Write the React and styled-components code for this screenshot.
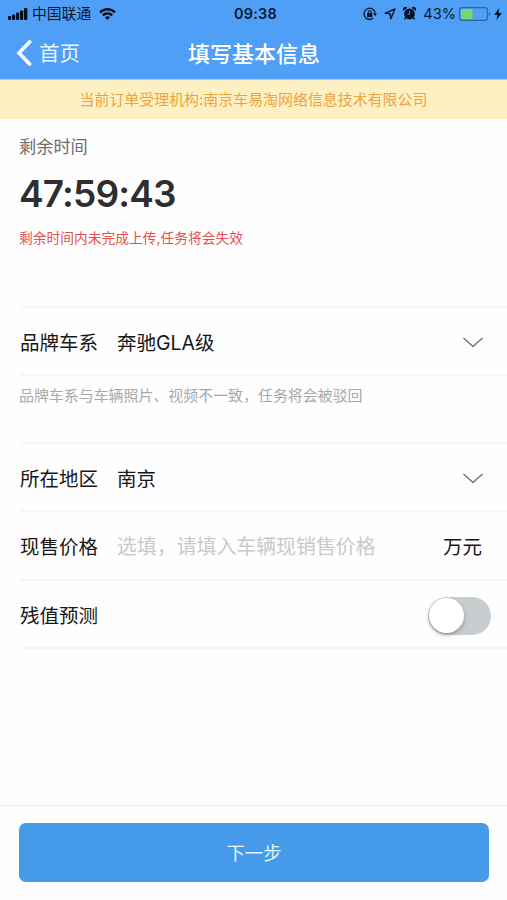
import React, {useState} from 'react';
import styled, {createGlobalStyle} from 'styled-components';

const GlobalStyle = createGlobalStyle`
  * { box-sizing: border-box; }
  body {
    margin: 0;
    background: #fefefe;
    font-family: Inter, "Noto Sans CJK SC", sans-serif;
  }
`

const Page = styled.div`
  display: flex;
  flex-direction: column;
  height: 900px;
  overflow: hidden;
`

const Header = styled.header`
  height: 80px;
  flex: none;
  background: #509ff6;
  border-bottom: 1px solid #a9cfdc;
`

const StatusBar = styled.div`
  display: grid;
  grid-template-columns: 1fr auto 1fr;
  align-items: center;
  height: 27px;
  padding: 0 5px 0 8px;
  color: #061a30;
`

const StatusSide = styled.div`
  display: flex;
  align-items: center;
  justify-content: ${props => props.$end ? 'flex-end' : 'flex-start'};
  gap: ${props => props.$gap || 0}px;

  svg {
    display: block;
    flex: none;
  }
`

const StatusText = styled.span`
  font-size: ${props => props.$size}px;
  font-weight: ${props => props.$bold ? 600 : 400};
  letter-spacing: ${props => props.$spacing || 0}px;
  line-height: 20px;
  margin: ${props => props.$margin || 0};
  white-space: nowrap;
`

const NavBar = styled.div`
  display: grid;
  grid-template-columns: 1fr auto 1fr;
  align-items: center;
  height: 52px;
  padding: 0 16px;
  color: #fff;
`

const BackButton = styled.button`
  display: flex;
  align-items: center;
  gap: 6px;
  padding: 0;
  border: 0;
  background: none;
  color: #e9f6ff;
  font: inherit;
  font-size: 20.5px;
  line-height: 30px;

  span {
    padding-top: 2px;
  }
`

const Title = styled.h1`
  margin: 0;
  padding: 1px 0 0 1px;
  font-size: 22px;
  font-weight: 500;
  line-height: 32px;
`

const Notice = styled.div`
  height: 39px;
  flex: none;
  padding-top: 1px;
  background: #fdf1c4;
  color: #eda33f;
  font-size: 14.95px;
  line-height: 39px;
  text-align: center;
`

const Countdown = styled.section`
  height: 187px;
  flex: none;
  padding: 15px 20px 0 19px;
`

const CountdownLabel = styled.div`
  font-size: 17.2px;
  line-height: 26px;
  color: #6c6c6c;
`

const Timer = styled.div`
  margin-top: 9px;
  font-size: 37px;
  font-weight: 600;
  line-height: 50px;
  letter-spacing: -0.85px;
  color: #2e2e2e;
`

const Warning = styled.div`
  margin-top: 9px;
  font-size: 13.75px;
  line-height: 20px;
  color: #e8504f;
`

const Group = styled.section`
  margin-left: 20px;
  flex: none;
  border-top: 2px solid #f6f6f6;
`

const Row = styled.div`
  display: flex;
  align-items: center;
  height: ${props => props.$height || 68}px;
  padding: 3px 24px 0 0;
  border-bottom: 2px solid #f6f6f6;
  font-size: 19.5px;
  line-height: 28px;
  color: #161616;
`

const Label = styled.div`
  width: 97px;
  flex: none;
`

const Value = styled.div`
  flex: 1;
`

const PriceInput = styled.input`
  flex: 1;
  min-width: 0;
  padding: 0;
  border: 0;
  outline: none;
  background: none;
  color: inherit;
  font: inherit;
  font-size: 19.9px;

  &::placeholder {
    color: #c9c9cb;
    opacity: 1;
  }
`

const Unit = styled.span`
  flex: none;
  margin-right: 1px;
`

const Hint = styled.div`
  height: 66px;
  flex: none;
  padding: 8px 20px 0 19px;
  font-size: 14.95px;
  line-height: 24px;
  color: #a9a9a9;
`

const Toggle = styled.button`
  display: flex;
  justify-content: ${props => props.$on ? 'flex-end' : 'flex-start'};
  width: 63px;
  height: 38px;
  margin: 0 -8px 0 auto;
  padding: 1px;
  border: 0;
  border-radius: 19px;
  background: ${props => props.$on ? '#459ae9' : '#c8cdcf'};
`

const Knob = styled.span`
  width: 35px;
  height: 35px;
  border-radius: 50%;
  background: #fff;
  box-shadow: 0 2px 4px rgba(0, 0, 0, 0.28);
`

const Footer = styled.footer`
  margin-top: auto;
  height: 95px;
  flex: none;
  padding: 17px 18px 0 19px;
  border-top: 1px solid #ebebeb;
`

const NextButton = styled.button`
  display: block;
  width: 100%;
  height: 59px;
  padding: 0 0 2px;
  border: 0;
  border-radius: 7px;
  background: #459ae9;
  color: #e3f6ff;
  font: inherit;
  font-size: 18.4px;
`

const Signal = () => (
  <svg width="20" height="12" viewBox="0 0 20 12" fill="#03101f">
    <rect x="0" y="8" width="3.2" height="4" rx="1"/>
    <rect x="4" y="6.4" width="3.2" height="5.6" rx="1"/>
    <rect x="8" y="4.6" width="3.2" height="7.4" rx="1"/>
    <rect x="12" y="2.4" width="3.2" height="9.6" rx="1"/>
    <rect x="16" y="0" width="3.4" height="12" rx="1"/>
  </svg>
)

const Wifi = () => (
  <svg width="17" height="12" viewBox="0 0 17 12" fill="none" stroke="#03101f" strokeWidth="2.4">
    <path d="M1 4.4C5.2 0.2 11.8 0.2 16 4.4"/>
    <path d="M3.8 7.4C6.5 4.8 10.5 4.8 13.2 7.4"/>
    <path d="M8.5 12L5.8 9.3C7.4 7.8 9.6 7.8 11.2 9.3Z" fill="#03101f" stroke="none"/>
  </svg>
)

const RotationLock = () => (
  <svg width="14" height="14" viewBox="0 0 14 14" fill="none" stroke="#061a30">
    <path d="M12.2 7.5A5.6 5.6 0 1 0 10.2 11.2" strokeWidth="1.3"/>
    <path d="M10.1 6.6H14L12.1 9.2Z" fill="#061a30" stroke="none"/>
    <rect x="4.1" y="6" width="5.2" height="4.2" rx="0.5" fill="#061a30" stroke="none"/>
    <path d="M5.2 6.5V5.2A1.5 1.5 0 0 1 8.2 5.2V6.5" strokeWidth="1.1"/>
  </svg>
)

const Location = () => (
  <svg width="12" height="12" viewBox="0 0 12 12" fill="none" stroke="#061a30" strokeWidth="1.4" strokeLinejoin="round">
    <path d="M11 1L6.8 10.8L6.2 5.8L1.2 5.2Z"/>
  </svg>
)

const Alarm = () => (
  <svg width="13" height="13" viewBox="0 0 13 13" fill="#03101f">
    <circle cx="6.5" cy="7" r="5.4"/>
    <path d="M0.4 3.8A2.3 2.3 0 0 1 4.3 0.9ZM12.6 3.8A2.3 2.3 0 0 0 8.7 0.9Z"/>
    <path d="M2.8 10.4L1.5 12.5M10.2 10.4L11.5 12.5" stroke="#03101f" strokeWidth="1.4"/>
    <path d="M6.7 4V7.2H4.4" fill="none" stroke="#509ff6" strokeWidth="0.9"/>
  </svg>
)

const Battery = () => (
  <svg width="32" height="14" viewBox="0 0 32 14">
    <rect x="0.6" y="0.6" width="27.8" height="12.8" rx="2.6" fill="none" stroke="#2f6299" strokeWidth="1.1"/>
    <rect x="2" y="2" width="11.5" height="10" rx="0.8" fill="#76d873"/>
    <path d="M29.8 4.8C31.6 5.4 31.6 8.6 29.8 9.2Z" fill="#2f6299"/>
  </svg>
)

const Bolt = () => (
  <svg width="8" height="12" viewBox="0 0 8 12" fill="#03101f">
    <path d="M5.4 0L0.2 6.8H3.4L2.4 12L7.8 4.9H4.4Z"/>
  </svg>
)

const BackArrow = () => (
  <svg width="17" height="26" viewBox="0 0 17 26" fill="none" stroke="#fff" strokeWidth="3.6" strokeLinecap="round" strokeLinejoin="miter">
    <path d="M13.6 2L3 13L13.6 24"/>
  </svg>
)

const ArrowDown = () => (
  <svg width="20" height="11" viewBox="0 0 20 11" fill="none" stroke="#777" strokeWidth="1.5">
    <path d="M0.5 1L10 9.5L19.5 1"/>
  </svg>
)

function App() {
  const [price, setPrice] = useState('');
  const [forecast, setForecast] = useState(false);

  return (<Page>
    <GlobalStyle/>

    <Header>
      <StatusBar>
        <StatusSide>
          <Signal/>
          <StatusText $size={14.8} $margin="1px 8px 0 4px">中国联通</StatusText>
          <Wifi/>
        </StatusSide>
        <StatusText $size={14.4} $bold $spacing={0.3} $margin="1px 0 0 1px">09:38</StatusText>
        <StatusSide $end $gap={7}>
          <RotationLock/>
          <Location/>
          <Alarm/>
          <StatusSide $gap={3}>
            <StatusText $size={14.6}>43%</StatusText>
            <Battery/>
            <Bolt/>
          </StatusSide>
        </StatusSide>
      </StatusBar>
      <NavBar>
        <BackButton>
          <BackArrow/>
          <span>首页</span>
        </BackButton>
        <Title>填写基本信息</Title>
      </NavBar>
    </Header>

    <Notice>当前订单受理机构:南京车易淘网络信息技术有限公司</Notice>

    <Countdown>
      <CountdownLabel>剩余时间</CountdownLabel>
      <Timer>47:59:43</Timer>
      <Warning>剩余时间内未完成上传,任务将会失效</Warning>
    </Countdown>

    <Group>
      <Row>
        <Label>品牌车系</Label>
        <Value>奔驰GLA级</Value>
        <ArrowDown/>
      </Row>
    </Group>
    <Hint>品牌车系与车辆照片、视频不一致，任务将会被驳回</Hint>

    <Group>
      <Row>
        <Label>所在地区</Label>
        <Value>南京</Value>
        <ArrowDown/>
      </Row>
      <Row $height={69}>
        <Label>现售价格</Label>
        <PriceInput
          value={price}
          placeholder="选填，请填入车辆现销售价格"
          onChange={(e) => setPrice(e.target.value)}/>
        <Unit>万元</Unit>
      </Row>
      <Row>
        <Label>残值预测</Label>
        <Toggle $on={forecast} onClick={() => setForecast(!forecast)}>
          <Knob/>
        </Toggle>
      </Row>
    </Group>

    <Footer>
      <NextButton>下一步</NextButton>
    </Footer>
  </Page>);
}

export default App;
